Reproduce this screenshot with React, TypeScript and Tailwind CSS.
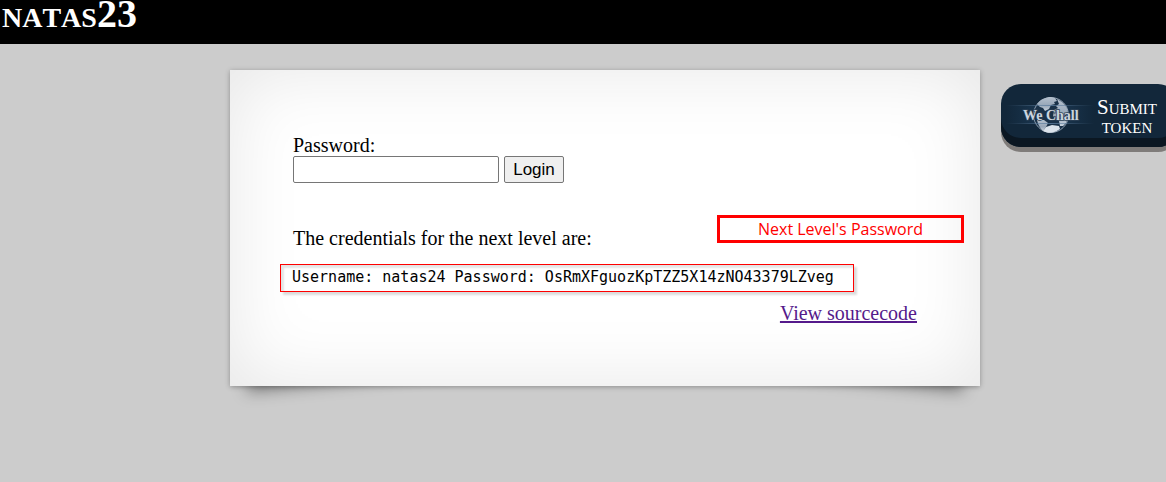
import React from "react";

function WeChallLogo() {
  return (
    <svg width="88" height="50" viewBox="0 0 88 50" role="img" aria-label="WeChall" className="shrink-0">
      <defs>
        <linearGradient id="beam" x1="0" x2="1">
          <stop offset="0" stopColor="#4f7396" stopOpacity="0" />
          <stop offset="0.5" stopColor="#5f7f9f" stopOpacity="0.8" />
          <stop offset="1" stopColor="#4f7396" stopOpacity="0" />
        </linearGradient>
        <linearGradient id="band" x1="0" x2="1">
          <stop offset="0" stopColor="#1d3e5c" stopOpacity="0" />
          <stop offset="0.5" stopColor="#203f5d" stopOpacity="0.8" />
          <stop offset="1" stopColor="#1d3e5c" stopOpacity="0" />
        </linearGradient>
        <linearGradient id="land" x1="0" y1="0" x2="0" y2="1">
          <stop offset="0" stopColor="#b4c0cd" />
          <stop offset="0.6" stopColor="#98a7b8" />
          <stop offset="1" stopColor="#c6d0db" />
        </linearGradient>
      </defs>
      <rect x="0" y="16" width="88" height="17" fill="url(#band)" />
      <circle cx="45" cy="25" r="17.5" fill="#1a3249" stroke="#8c9cae" strokeWidth="1" />
      <path d="M31 14 C35 9 40 7 45 7 L49 8 L51 11 L48 12 L49 14 L45 15 L43 19 L39 21 L37 18 L34 17 Z" fill="url(#land)" />
      <path d="M51 9 C57 12 61 16 62 22 L62 28 L60 33 L57 36 L54 36 L53 31 L50 29 L47 26 L48 20 L52 18 L50 16 L53 14 Z" fill="url(#land)" />
      <path d="M31 30 L38 30 L42 33 L40 37 L37 41 C34 38 32 35 31 30 Z" fill="url(#land)" />
      <path d="M37 41 L40 37 L46 35 L53 36 L54 39 C49 43 42 44 37 41 Z" fill="#dbe3eb" />
      <rect x="0" y="15" width="88" height="1" fill="url(#beam)" />
      <rect x="0" y="33" width="88" height="1" fill="url(#beam)" />
      <text
        x="17"
        y="30"
        fill="#ccd5df"
        stroke="#2b3f54"
        strokeWidth="1.5"
        paintOrder="stroke"
        className="font-['Liberation_Serif',serif] text-[14px] font-bold"
      >
        We Chall
      </text>
    </svg>
  );
}

function SubmitToken() {
  return (
    <a
      href="#token"
      className="absolute top-[84px] -right-3 flex h-[63px] w-[177px] items-start rounded-[20px] bg-[#12273a] pt-1.5 pl-[5px] text-white shadow-[inset_0_-9px_0_#0b1722,0_5px_0_#7f7c7a]"
    >
      <WeChallLogo />
      <span className="w-[66px] pt-2 text-center text-[21px] leading-[19px] [font-variant:small-caps]">
        Submit token
      </span>
    </a>
  );
}

function CurledShadows() {
  return (
    <>
      <div className="absolute bottom-3 left-[34px] -z-10 h-[55%] w-1/2 max-w-[200px] [transform:skew(-15deg)_rotate(-6deg)] shadow-[0_8px_16px_rgba(0,0,0,0.4)]" />
      <div className="absolute right-[34px] bottom-3 -z-10 h-[55%] w-1/2 max-w-[200px] [transform:skew(15deg)_rotate(6deg)] shadow-[0_8px_16px_rgba(0,0,0,0.4)]" />
    </>
  );
}

export default function App() {
  return (
    <div className="relative min-h-screen overflow-hidden bg-[#cccccc] font-['Liberation_Serif',serif] text-[20px] leading-[22px] text-black">
      <header className="bg-black pb-4 pl-0.5 text-white">
        <h1 className="text-[40px] leading-[28px] font-bold [font-kerning:none] [font-variant:small-caps]">natas23</h1>
      </header>
      <SubmitToken />
      <div className="flex justify-center pt-[26px] pl-11">
        <main className="relative isolate w-full max-w-[750px]">
          <CurledShadows />
          <div className="bg-white px-[63px] pt-16 pb-[62px] shadow-[0_1px_5px_rgba(0,0,0,0.3),inset_0_0_75px_rgba(0,0,0,0.1)]">
            <form onSubmit={(e: React.FormEvent) => e.preventDefault()}>
              <label htmlFor="passwd" className="block">
                Password:
              </label>
              <div className="flex gap-[5px]">
                <input
                  id="passwd"
                  type="text"
                  className="h-[27px] w-[206px] rounded-[2px] border border-[#767676] bg-white px-1 font-['Liberation_Sans',sans-serif] text-[17px]"
                />
                <button
                  type="submit"
                  className="h-[27px] w-[60px] rounded-[2px] border border-[#767676] bg-[#efefef] font-['Liberation_Sans',sans-serif] text-[17px] leading-[25px]"
                >
                  Login
                </button>
              </div>
            </form>
            <p className="mt-11">The credentials for the next level are:</p>
            <pre className="mt-[15px] -ml-[13px] w-fit border border-[#ff0000] pr-[19px] pb-0.5 pl-[11px] font-['DejaVu_Sans_Mono',monospace] text-[15px] leading-[24px] shadow-[3px_3px_2px_rgba(0,0,0,0.14),inset_3px_3px_2px_rgba(0,0,0,0.1)]">
              Username: natas24 Password: OsRmXFguozKpTZZ5X14zNO43379LZveg
            </pre>
            <div className="mt-[10px] text-right">
              <a href="#source" className="text-[#551a8b] underline">
                View sourcecode
              </a>
            </div>
          </div>
          <div className="absolute top-[145px] right-4 w-[247px] border-[3px] border-[#ff0000] text-center font-['Open_Sans',sans-serif] text-[16px] leading-[22px] text-[#ff0000]">
            Next Level's Password
          </div>
        </main>
      </div>
    </div>
  );
}
